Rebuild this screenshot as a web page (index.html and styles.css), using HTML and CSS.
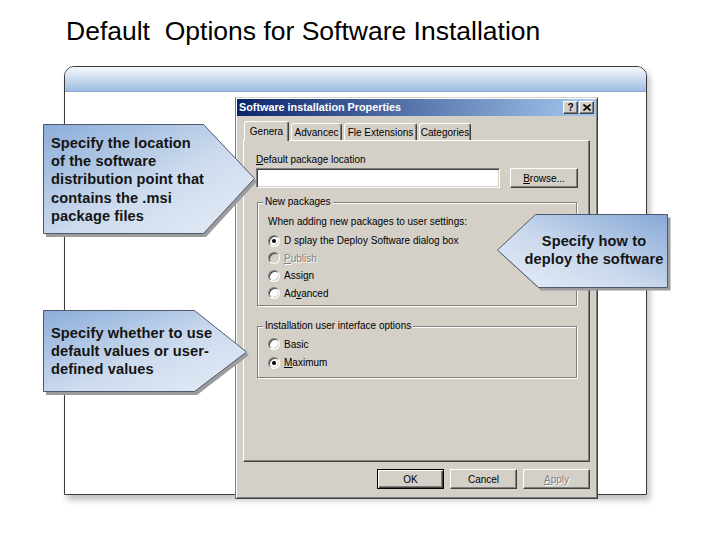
FILE: index.html
```html
<!DOCTYPE html>
<html>
<head>
<meta charset="utf-8">
<title>Default Options for Software Installation</title>
<link rel="stylesheet" href="styles.css">
</head>
<body>
<div class="stage">
  <h1 class="slide-title">Default&nbsp; Options for Software Installation</h1>

  <div class="outer-win">
    <div class="outer-title"></div>
    <div class="outer-body">
      <div class="dialog">
        <div class="dlg-title">
          <span class="dlg-title-text">Software installation Properties</span>
          <span class="cap-btns">
            <span class="cap-btn">?</span>
            <span class="cap-btn">
              <svg width="8" height="7" viewBox="0 0 8 7"><path d="M0.5 0.5 L7.5 6.5 M7.5 0.5 L0.5 6.5" stroke="#000" stroke-width="1.6" fill="none"/></svg>
            </span>
          </span>
        </div>
        <div class="dlg-body">
          <div class="tabs">
            <span class="tab active t1">Genera</span>
            <span class="tab t2">Advancec</span>
            <span class="tab t3">Fle Extensions</span>
            <span class="tab t4">Categories</span>
          </div>
          <div class="panel">
            <div class="lbl"><u>D</u>efault package location</div>
            <div class="loc-row">
              <div class="textbox"></div>
              <div class="btn browse"><u>B</u>rowse...</div>
            </div>
            <fieldset class="group g1">
              <legend>New packages</legend>
              <div class="grp-text">When adding new packages to user settings:</div>
              <div class="radio-row"><span class="radio on"></span>D splay the Deploy Software dialog box</div>
              <div class="radio-row dis"><span class="radio off"></span><u>P</u>ublish</div>
              <div class="radio-row"><span class="radio"></span>Assi<u>g</u>n</div>
              <div class="radio-row"><span class="radio"></span>Ad<u>v</u>anced</div>
            </fieldset>
            <fieldset class="group g2">
              <legend>Installation user interface options</legend>
              <div class="radio-row"><span class="radio"></span>Basic</div>
              <div class="radio-row"><span class="radio on"></span><u>M</u>aximum</div>
            </fieldset>
          </div>
          <div class="btn-row">
            <div class="btn default">OK</div>
            <div class="btn">Cancel</div>
            <div class="btn dis"><u>A</u>pply</div>
          </div>
        </div>
      </div>
    </div>
  </div>

  <div class="callout ca">
    <svg class="callout-shape" width="216" height="114" viewBox="0 0 216 114">
      <defs>
        <linearGradient id="ga" x1="0" y1="0" x2="1" y2="1">
          <stop offset="0" stop-color="#8badd9"/>
          <stop offset="0.55" stop-color="#cddbee"/>
          <stop offset="1" stop-color="#e6edf6"/>
        </linearGradient>
      </defs>
      <polygon points="3,3.5 163,3.5 214,57.5 163,113 3,113" fill="#9c9c9c"/>
      <polygon points="0.5,0.5 160.5,0.5 211.5,54.5 160.5,109.5 0.5,109.5" fill="url(#ga)" stroke="#4d5a6e"/>
    </svg>
    <div class="callout-text">Specify the location<br>of the software<br>distribution point that<br>contains the .msi<br>package files</div>
  </div>

  <div class="callout cb">
    <svg class="callout-shape" width="175" height="78" viewBox="0 0 175 78">
      <defs>
        <linearGradient id="gb" x1="1" y1="0" x2="0" y2="1">
          <stop offset="0" stop-color="#86a8d6"/>
          <stop offset="0.55" stop-color="#cbd9ed"/>
          <stop offset="1" stop-color="#e6edf6"/>
        </linearGradient>
      </defs>
      <polygon points="3,39 41,3.5 173.5,3.5 173.5,76.5 44,76.5" fill="#9c9c9c"/>
      <polygon points="0.5,36 38.5,0.5 170.5,0.5 170.5,73.5 41.5,73.5" fill="url(#gb)" stroke="#4d5a6e"/>
    </svg>
    <div class="callout-text centered">Specify how to<br>deploy the software</div>
  </div>

  <div class="callout cc">
    <svg class="callout-shape" width="208" height="86" viewBox="0 0 208 86">
      <defs>
        <linearGradient id="gc" x1="0" y1="0" x2="1" y2="1">
          <stop offset="0" stop-color="#8badd9"/>
          <stop offset="0.55" stop-color="#cddbee"/>
          <stop offset="1" stop-color="#e6edf6"/>
        </linearGradient>
      </defs>
      <polygon points="3,3.5 154,3.5 206,45 154,85 3,85" fill="#9c9c9c"/>
      <polygon points="0.5,0.5 151.5,0.5 203.5,42 151.5,81.5 0.5,81.5" fill="url(#gc)" stroke="#4d5a6e"/>
    </svg>
    <div class="callout-text">Specify whether to use<br>default values or user-<br>defined values</div>
  </div>
</div>
</body>
</html>
```

FILE: styles.css
```css
* { box-sizing: border-box; }

html, body {
  margin: 0;
  padding: 0;
  background: #fff;
}

body {
  font-family: "Liberation Sans", Arial, sans-serif;
  color: #000;
}

.stage {
  position: relative;
  width: 720px;
  height: 540px;
  overflow: hidden;
}

.slide-title {
  margin: 0;
  padding: 16px 0 0 66px;
  font-weight: normal;
  font-size: 26.5px;
  line-height: 30px;
  color: #000;
}

/* outer (MMC-style) window */
.outer-win {
  margin: 20px 0 0 64px;
  width: 583px;
  height: 429px;
  border: 1px solid #3a3a3a;
  border-radius: 10px 10px 0 0;
  background: #fff;
  box-shadow: 3px 5px 6px rgba(0, 0, 0, 0.25);
}

.outer-title {
  height: 25px;
  border-radius: 9px 9px 0 0;
  background: linear-gradient(#f5f8fc, #d0dff1 45%, #9dbce2);
  border-bottom: 1px solid #8ea9cc;
}

.outer-body {
  padding: 5px 0 0 170px;
}

/* properties dialog */
.dialog {
  width: 363px;
  height: 402px;
  padding: 1px;
  background: #d4d0c8;
  border: 1px solid;
  border-color: #d4d0c8 #404040 #404040 #6f7d92;
  box-shadow: inset 1px 1px 0 #fff, inset -1px -1px 0 #808080;
  display: flex;
  flex-direction: column;
}

.dlg-title {
  height: 17px;
  display: flex;
  align-items: center;
  justify-content: space-between;
  padding: 0 2px 0 2px;
  background: linear-gradient(90deg, #0a246a, #a6caf0);
}

.dlg-title-text {
  color: #fff;
  font-weight: bold;
  font-size: 10.8px;
  line-height: 13px;
}

.cap-btns {
  display: flex;
  gap: 1px;
}

.cap-btn {
  width: 15px;
  height: 13px;
  display: flex;
  align-items: center;
  justify-content: center;
  background: #d4d0c8;
  border: 1px solid;
  border-color: #fff #404040 #404040 #fff;
  box-shadow: inset -1px -1px 0 #808080;
  font-weight: bold;
  font-size: 10px;
  line-height: 11px;
  color: #000;
}

.dlg-body {
  flex: 1;
  padding: 5px 6px 0 6px;
  display: flex;
  flex-direction: column;
  font-size: 10px;
}

.tabs {
  display: flex;
  align-items: flex-end;
  gap: 2px;
  height: 19px;
  padding-left: 1px;
  position: relative;
  z-index: 1;
}

.tab {
  height: 17px;
  padding-top: 1px;
  border: 1px solid;
  border-bottom: none;
  border-color: #fff #404040 transparent #fff;
  box-shadow: inset -1px 0 0 #808080;
  border-radius: 3px 3px 0 0;
  background: #d4d0c8;
  text-align: center;
  font-size: 10px;
  line-height: 15px;
}

.tab.active {
  height: 20px;
  margin-bottom: -1px;
  padding-top: 2px;
  line-height: 16px;
}

.t1 { width: 45px; }
.t2 { width: 51px; }
.t3 { width: 73px; }
.t4 { width: 52px; }

.panel {
  height: 322px;
  border: 1px solid;
  border-color: #fff #404040 #404040 #fff;
  box-shadow: inset -1px -1px 0 #808080;
  padding: 13px 0 0 12px;
}

.lbl {
  line-height: 12px;
}

.loc-row {
  display: flex;
  margin-top: 2px;
}

.textbox {
  width: 244px;
  height: 20px;
  background: #fff;
  border: 1px solid;
  border-color: #808080 #fff #fff #808080;
  box-shadow: inset 1px 1px 0 #404040, inset -1px -1px 0 #d4d0c8;
}

.btn {
  width: 67px;
  height: 20px;
  display: flex;
  align-items: center;
  justify-content: center;
  background: #d4d0c8;
  border: 1px solid;
  border-color: #fff #404040 #404040 #fff;
  box-shadow: inset -1px -1px 0 #808080;
  font-size: 10px;
}

.btn.browse {
  width: 68px;
  margin-left: 10px;
}

.btn.default {
  border-color: #000;
  box-shadow: inset 1px 1px 0 #fff, inset -1px -1px 0 #404040, inset -2px -2px 0 #808080;
}

.group {
  width: 320px;
  min-width: 0;
  margin: 8px 0 0 1px;
  border: 1px solid #808080;
  box-shadow: inset 1px 1px 0 #fff, 1px 1px 0 #fff;
  padding: 8px 0 3px 10px;
}

.group legend {
  padding: 0 2px;
  margin-left: -5px;
  font-size: 10px;
  line-height: 12px;
  background: #d4d0c8;
}

.grp-text {
  line-height: 12px;
  margin-bottom: 4px;
}

.radio-row {
  display: flex;
  align-items: center;
  height: 17.5px;
}

.g2 {
  margin-top: 14px;
  padding-top: 3px;
  padding-bottom: 5px;
}

.g2 .radio-row {
  height: 18.5px;
}

.radio {
  position: relative;
  flex: none;
  width: 12px;
  height: 12px;
  margin-right: 4px;
  border-radius: 50%;
  background: #fff;
  border: 1px solid;
  border-color: #808080 #fff #fff #808080;
  box-shadow: inset 1px 1px 0 #404040, inset -1px -1px 0 #d4d0c8;
}

.radio.on::after {
  content: "";
  position: absolute;
  left: 3px;
  top: 3px;
  width: 4px;
  height: 4px;
  border-radius: 50%;
  background: #000;
}

.radio.off {
  background: #d4d0c8;
}

.dis {
  color: #808080;
  text-shadow: 1px 1px 0 #fff;
}

.btn-row {
  display: flex;
  justify-content: flex-end;
  gap: 6px;
  margin-top: 7px;
}

/* callouts */
.callout {
  position: absolute;
  z-index: 5;
}

.callout-shape {
  position: absolute;
  left: 0;
  top: 0;
}

.callout-text {
  position: relative;
  font-weight: bold;
  font-size: 14.6px;
  line-height: 18.2px;
  color: #141414;
  letter-spacing: 0.1px;
}

.ca {
  left: 43px;
  top: 124px;
  width: 216px;
  height: 114px;
}

.ca .callout-text {
  padding: 10px 0 0 8px;
}

.cb {
  left: 497px;
  top: 214px;
  width: 175px;
  height: 78px;
}

.cb .callout-text {
  width: 174px;
  padding: 18px 0 0 20px;
  text-align: center;
}

.cc {
  left: 43px;
  top: 310px;
  width: 208px;
  height: 86px;
}

.cc .callout-text {
  padding: 14px 0 0 8px;
}
```
